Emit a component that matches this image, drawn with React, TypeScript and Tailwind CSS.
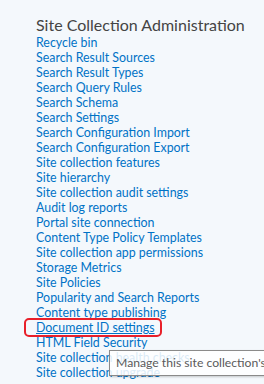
import React from "react";

const links = [
  "Recycle bin",
  "Search Result Sources",
  "Search Result Types",
  "Search Query Rules",
  "Search Schema",
  "Search Settings",
  "Search Configuration Import",
  "Search Configuration Export",
  "Site collection features",
  "Site hierarchy",
  "Site collection audit settings",
  "Audit log reports",
  "Portal site connection",
  "Content Type Policy Templates",
  "Site collection app permissions",
  "Storage Metrics",
  "Site Policies",
  "Popularity and Search Reports",
  "Content type publishing",
  "Document ID settings",
  "HTML Field Security",
  "Site collection health checks",
  "Site collection upgrade",
];

export default function App() {
  return (
    <div
      className="relative w-[264px] h-[384px] overflow-hidden bg-[#f4f8fc]"
      style={{ fontFamily: "Lato, 'Open Sans', sans-serif" }}
    >
      <div className="pl-[36px] pt-[15px]">
        <h2 className="text-[16px] leading-[20px] text-[#444444] font-normal">
          Site Collection Administration
        </h2>
        <ul className="flex flex-col">
          {links.map((l) => (
            <li key={l} className="text-[12.4px] leading-[15px] text-[#0072c6]">
              {l === "Document ID settings" ? (
                <span className="relative underline">
                  {l}
                  <span className="absolute -left-[12px] -right-[7px] -top-[2px] -bottom-[2px] rounded-[5px] border-2 border-[#e8202a]" />
                </span>
              ) : (
                <span>{l}</span>
              )}
            </li>
          ))}
        </ul>
      </div>
      <div className="absolute left-[109px] top-[350px] h-[26px] w-[200px] border border-[#8a8a8a] bg-white/85 shadow-[1px_1px_2px_rgba(0,0,0,0.2)] pl-[6px] pt-[4px] text-[12.2px] leading-[16px] text-[#5a5a5a] whitespace-nowrap">
        Manage this site collection's settings
      </div>
    </div>
  );
}
